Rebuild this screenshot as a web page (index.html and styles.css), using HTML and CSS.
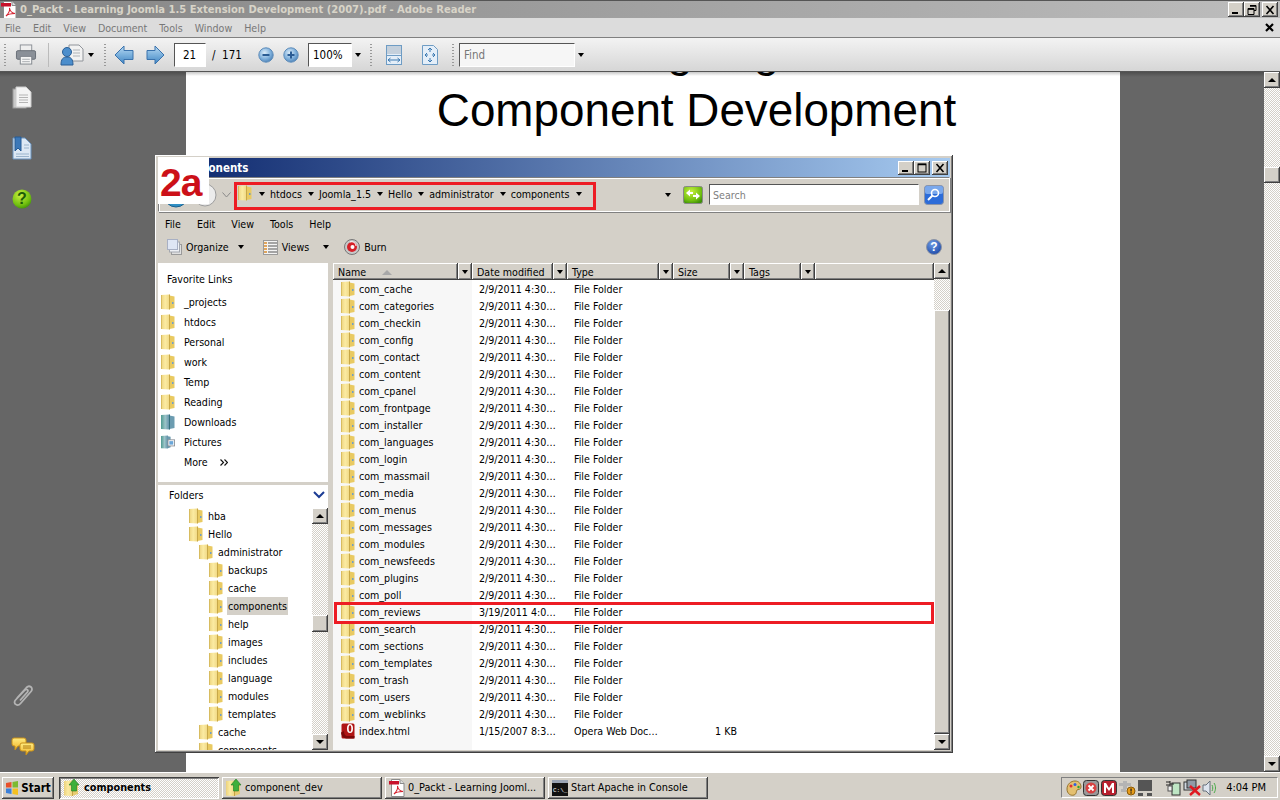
FILE: index.html
```html
<!DOCTYPE html>
<html lang="en">
<head>
  <meta charset="UTF-8">
  <title>0_Packt - Learning Joomla 1.5 Extension Development (2007).pdf - Adobe Reader</title>
  <link rel="stylesheet" href="styles.css">
</head>
<body>

<svg class="sprites" width="0" height="0">
  <defs>
    <linearGradient id="gFold" x1="0" x2="1" y1="0" y2="0">
      <stop offset="0" stop-color="#ecd27c"/><stop offset=".5" stop-color="#fbeba2"/><stop offset="1" stop-color="#f0d884"/>
    </linearGradient>
    <linearGradient id="gTeal" x1="0" x2="1" y1="0" y2="0">
      <stop offset="0" stop-color="#4f9a90"/><stop offset=".5" stop-color="#9cc4c8"/><stop offset="1" stop-color="#5f8fa8"/>
    </linearGradient>
    <linearGradient id="gBlue" x1="0" x2="0" y1="0" y2="1">
      <stop offset="0" stop-color="#b6daf4"/><stop offset="1" stop-color="#3f86c4"/>
    </linearGradient>
    <radialGradient id="gRound" cx=".4" cy=".35" r=".7">
      <stop offset="0" stop-color="#dcecf8"/><stop offset=".6" stop-color="#7fb0dc"/><stop offset="1" stop-color="#4a7fb4"/>
    </radialGradient>
    <radialGradient id="gGreen" cx=".4" cy=".3" r=".75">
      <stop offset="0" stop-color="#c8f040"/><stop offset=".7" stop-color="#72c010"/><stop offset="1" stop-color="#3f9008"/>
    </radialGradient>
    <radialGradient id="gHelp" cx=".4" cy=".3" r=".75">
      <stop offset="0" stop-color="#6f9ce4"/><stop offset="1" stop-color="#1c48a8"/>
    </radialGradient>
    <linearGradient id="gYel" x1="0" x2="0" y1="0" y2="1">
      <stop offset="0" stop-color="#ffeb80"/><stop offset="1" stop-color="#f0b428"/>
    </linearGradient>
    <symbol id="folder" viewBox="0 0 14 16">
      <path d="M0 1 8.500 .5V15.500L0 15Z" fill="url(#gFold)"/>
      <path d="M8.500 1.500 13.500 2.500V14L8.500 15Z" fill="#e9ca62"/>
      <path d="M8.500 .5V15.500" stroke="#c8a848" stroke-width="1"/>
      <path d="M.5 1V15" stroke="#d8bc60" stroke-width="1"/>
      <rect x="11" y="8" width="1.500" height="2" fill="#6f9ec8"/>
    </symbol>
    <symbol id="tealfolder" viewBox="0 0 14 16">
      <path d="M0 1 8.500 .5V15.500L0 15Z" fill="url(#gTeal)"/>
      <path d="M8.500 1.500 13.500 2.500V14L8.500 15Z" fill="#6c9cb0"/>
      <path d="M8.500 .5V15.500" stroke="#35707c"/>
    </symbol>
    <symbol id="pics" viewBox="0 0 16 16">
      <path d="M0 1 8 .5V15.500L0 15Z" fill="url(#gTeal)"/>
      <path d="M8 1.500 11 2V14L8 15Z" fill="#6c9cb0"/>
      <rect x="8" y="5.500" width="7.500" height="7" fill="#fff" stroke="#8a8f96"/>
      <rect x="9.500" y="7" width="4.500" height="4" fill="#6aa6d8"/>
    </symbol>
    <symbol id="opera" viewBox="0 0 14 16">
      <rect x=".5" y=".5" width="13" height="15" rx="1.500" fill="#b01414"/>
      <path d="M0 9.500C.5 14 3 15.500 7 15.500H13.500V13H7C4 13 3 11 3 8Z" fill="#7c0808"/>
      <ellipse cx="9" cy="5.500" rx="3" ry="4.500" fill="#fff"/>
      <ellipse cx="9" cy="5.500" rx="1.300" ry="3.200" fill="#b01414"/>
    </symbol>
    <symbol id="pdf" viewBox="0 0 16 18">
      <path d="M2.500 .5H11L15 4.500V17.500H2.500Z" fill="#fff" stroke="#8a8a8a"/>
      <path d="M11 .5V4.500H15" fill="#ddd" stroke="#8a8a8a"/>
      <rect x="0" y="2" width="10" height="3.500" fill="#c8102a"/>
      <path d="M5 15C8 12 9 9 8.500 7 9 10 11 12 14 12.500 10 12.500 7 13 5 15Z" fill="none" stroke="#d4202e" stroke-width="1.100"/>
    </symbol>
    <symbol id="explorer" viewBox="0 0 16 18">
      <path d="M0 2 8 1.500V17L0 16.500Z" fill="url(#gFold)"/>
      <path d="M8 3 14 4.500V15L8 17Z" fill="#e7cc70"/>
      <path d="M8.500 1.500V17" stroke="#c5a444"/>
      <path d="M10 0 15 6H12.500V12H7.500V6H5Z" fill="#3fb03a" stroke="#1f7a20" stroke-width=".6"/>
    </symbol>
  </defs>
</svg>

<div class="titlebar">
  <svg class="ico16"><use href="#pdf"/></svg>
  <span class="titlebar-text">0_Packt - Learning Joomla 1.5 Extension Development (2007).pdf - Adobe Reader</span>
  <div class="wbtns main-wbtns">
    <button class="wbtn"><svg viewBox="0 0 14 12"><rect x="3" y="8" width="6" height="2" fill="#000"/></svg></button>
    <button class="wbtn"><svg viewBox="0 0 14 12"><path d="M5 1.500h6v5h-2M3 4.500h6v6H3zM3 5h6" fill="none" stroke="#000"/><path d="M5 2h6M3 5h6" stroke="#000" stroke-width="1.600"/></svg></button>
    <button class="wbtn wbtn-close"><svg viewBox="0 0 14 12"><path d="M3.500 2 10.500 10M10.500 2 3.500 10" stroke="#000" stroke-width="1.600"/></svg></button>
  </div>
</div>

<div class="menubar">
  <span>File</span><span>Edit</span><span>View</span><span>Document</span><span>Tools</span><span>Window</span><span>Help</span>
  <svg class="doc-close" viewBox="0 0 9 9"><path d="M1 1 8 8M8 1 1 8" stroke="#000" stroke-width="2.200"/></svg>
</div>

<div class="toolbar">
  <i class="grip g1"></i>
  <svg class="tb-print" width="22" height="21" viewBox="0 0 22 22">
    <rect x="5" y="1" width="12" height="7" fill="#eee" stroke="#8b9096"/>
    <rect x="1" y="7" width="20" height="9" rx="1.500" fill="#8a9098" stroke="#666c74"/>
    <rect x="5" y="13" width="12" height="8" fill="#f4f4f4" stroke="#80868c"/>
    <path d="M7 16h8M7 18.500h8" stroke="#a8acb0"/>
  </svg>
  <i class="sep s1"></i>
  <svg class="tb-share" width="24" height="22" viewBox="0 0 24 22">
    <path d="M9 1h10l4 4v12H9z" fill="#f2f2f2" stroke="#90949a"/>
    <path d="M13 6h7M13 9h7M13 12h7" stroke="#b0b4b8"/>
    <circle cx="7" cy="8" r="4.500" fill="#4c8ecc" stroke="#2b5f96"/>
    <path d="M1 21C1 15 3 13 7 13S13 15 13 21Z" fill="#4c8ecc" stroke="#2b5f96"/>
  </svg>
  <i class="caret c-share"></i>
  <i class="grip g2"></i>
  <svg class="tb-prev" width="20" height="20" viewBox="0 0 20 20"><path d="M1 10 10 1V5.500H19V14.500H10V19Z" fill="url(#gBlue)" stroke="#3a72ac"/></svg>
  <svg class="tb-next" width="19" height="20" viewBox="0 0 19 20"><path d="M18 10 9 1V5.500H1V14.500H9V19Z" fill="url(#gBlue)" stroke="#3a72ac"/></svg>
  <span class="tb-input tb-page">21</span>
  <span class="tb-count">/&nbsp; 171</span>
  <svg class="tb-minus" width="16" height="16" viewBox="0 0 16 16"><circle cx="8" cy="8" r="7.200" fill="url(#gRound)" stroke="#5d8cba"/><rect x="4.500" y="7" width="7" height="2" fill="#2a5c94"/></svg>
  <svg class="tb-plus" width="16" height="16" viewBox="0 0 16 16"><circle cx="8" cy="8" r="7.200" fill="url(#gRound)" stroke="#5d8cba"/><path d="M4.500 8h7M8 4.500v7" stroke="#2a5c94" stroke-width="2"/></svg>
  <span class="tb-input tb-zoom">100%</span>
  <i class="caret c-zoom"></i>
  <i class="grip g3"></i>
  <svg class="tb-fitw" width="16" height="20" viewBox="0 0 16 20"><rect x=".5" y=".5" width="15" height="19" fill="#e4eef8" stroke="#6e9cc4"/><rect x="1" y="1" width="14" height="8" fill="#c4d0dc"/><path d="M1 10.500h14" stroke="#6e9cc4"/><path d="M2 15h12M2 15l2.500-2M2 15l2.500 2M14 15l-2.500-2M14 15l-2.500 2" fill="none" stroke="#3a78b0"/></svg>
  <svg class="tb-fitp" width="16" height="20" viewBox="0 0 16 20"><path d="M.5.500h11l4 4v15H.5z" fill="#e4eef8" stroke="#6e9cc4"/><path d="M8 3V7M8 3 6 5M8 3l2 2M8 17V13M8 17l-2-2M8 17l2-2M3 10H6M3 10l2-2M3 10l2 2M13 10H10M13 10l-2-2M13 10l-2 2" fill="none" stroke="#3a78b0"/></svg>
  <i class="grip g4"></i>
  <span class="tb-input tb-find">Find</span>
  <i class="caret c-find"></i>
</div>

<div class="viewer">
  <div class="side">
    <div class="side-top">
      <svg width="20" height="24" viewBox="0 0 20 24"><rect x="1" y="3" width="13" height="19" fill="#c8c8c8" stroke="#999"/><path d="M4 1h10l5 5v15H4z" fill="#f4f4f4" stroke="#ccc"/><path d="M7 9h9M7 11.500h9M7 14h9M7 16.500h9" stroke="#b4b4b4"/></svg>
      <svg class="side-gap1" width="20" height="24" viewBox="0 0 20 24"><path d="M1 2h12l6 6v15H1z" fill="#dce8f4" stroke="#6a94c0"/><path d="M3 1h6v14l-3-3-3 3z" fill="#3c78b8" stroke="#245a94"/><path d="M12 12h5M4 18h13M4 20.500h13M12 9h5" stroke="#9ab4cc"/></svg>
      <svg class="side-gap2" width="20" height="20" viewBox="0 0 20 20"><circle cx="10" cy="10" r="9.500" fill="url(#gGreen)"/><text x="10" y="15" class="side-q">?</text></svg>
    </div>
    <div class="side-bottom">
      <svg width="22" height="25" viewBox="0 0 22 25"><path d="M5 14 14.500 3.500C17.500 .5 22 4 19 7.500L8.500 19.500C5.500 23 .5 19.500 3.500 16L13 6C14.500 4.500 17 6 15.500 8L8 16.500" fill="none" stroke="#b4b4b4" stroke-width="1.800"/></svg>
      <svg class="side-gap3" width="24" height="19" viewBox="0 0 24 19"><path d="M3 1h10q2 0 2 2v4q0 2-2 2H7l-3 4V9H3Q1 9 1 7V3q0-2 2-2z" fill="url(#gYel)" stroke="#c89018"/><path d="M11 6h10q2 0 2 2v4q0 2-2 2h-3l-3 4v-4h-4q-2 0-2-2V8q0-2 2-2z" fill="url(#gYel)" stroke="#c89018"/><path d="M12 9h8M12 11h8" stroke="#b07c10"/></svg>
    </div>
  </div>
  <div class="page">
    <h1 class="page-title">Designing a<br>Component Development</h1>
  </div>
  <div class="gutter"></div>
  <div class="sb sb-main">
    <button class="sb-btn"><i class="tri-up"></i></button>
    <div class="sb-track t-main-a"></div>
    <div class="sb-thumb t-main-b"></div>
    <div class="sb-track sb-fill"></div>
    <button class="sb-btn"><i class="tri-down"></i></button>
  </div>
</div>

<div class="taskbar">
  <button class="start">
    <svg width="14" height="14" viewBox="0 0 14 14"><path d="M1 2 6.500 1V6.500H1Z" fill="#e8502a"/><path d="M7.500 1 13 0V6.500H7.500Z" fill="#7cba30"/><path d="M1 7.500H6.500V13L1 12Z" fill="#3c80d8"/><path d="M7.500 7.500H13V14L7.500 13Z" fill="#f4c020"/></svg>
    Start
  </button>
  <button class="task task-on"><svg class="ico16"><use href="#explorer"/></svg>components</button>
  <button class="task"><svg class="ico16"><use href="#explorer"/></svg>component_dev</button>
  <button class="task"><svg class="ico16"><use href="#pdf"/></svg>0_Packt - Learning Jooml...</button>
  <button class="task"><svg class="ico16" viewBox="0 0 16 16"><rect width="16" height="16" y="0" fill="#111"/><rect width="16" height="3" fill="#9aa4b4"/><text x="1" y="12" class="cmd-text">C:\_</text></svg>Start Apache in Console</button>
  <div class="tray">
    <svg width="16" height="16" viewBox="0 0 16 16"><path d="M1 9C1 4 5 1 9 1s6 3 6 6-3 2-4 3 0 4-3 5-7-1-7-6Z" fill="#e4c070" stroke="#96742c"/><circle cx="5" cy="6" r="1.500" fill="#e03030"/><circle cx="9" cy="4.500" r="1.500" fill="#3060e0"/><circle cx="12.500" cy="7" r="1.200" fill="#30a030"/></svg>
    <svg class="tray-a" width="16" height="16" viewBox="0 0 16 16"><rect x=".5" y=".5" width="15" height="15" rx="3" fill="#999" stroke="#333"/><circle cx="8" cy="8" r="5.500" fill="#d84040"/><path d="M5.500 5.500 10.500 10.500M10.500 5.500 5.500 10.500" stroke="#fff" stroke-width="1.800"/></svg>
    <svg class="tray-b" width="16" height="16" viewBox="0 0 16 16"><rect x=".5" y=".5" width="15" height="15" rx="3" fill="#b8202e" stroke="#333"/><path d="M3 13V3H5L8 8 11 3H13V13H11V7L8 11 5 7V13Z" fill="#fff"/></svg>
    <svg class="tray-b" width="18" height="16" viewBox="0 0 18 16"><path d="M0 3h4V1h4v2h4v3h-4v3H4V6H0ZM2 9h5v3H2Z" fill="#b4b4b4"/><circle cx="12" cy="11" r="4" fill="#e89c18" stroke="#8a5a08"/><rect x="11.400" y="8.500" width="1.300" height="3" fill="#222"/><rect x="11.400" y="12.300" width="1.300" height="1.300" fill="#222"/></svg>
    <svg class="tray-a" width="14" height="16" viewBox="0 0 14 16"><rect x="0" y="0" width="14" height="11" fill="#555"/><rect x="0" y="13" width="5" height="3" fill="#555"/><rect x="9" y="13" width="5" height="3" fill="#555"/></svg>
    <svg class="tray-plug" width="16" height="16" viewBox="0 0 16 16"><rect x="7" y="3" width="8" height="12" fill="#bfe6c4" stroke="#333"/><path d="M1 2h4M1 5h4M5 1v6M5 4h4" stroke="#222"/><rect x="3" y="6" width="4" height="5" fill="#eee" stroke="#555"/></svg>
    <svg class="tray-b" width="18" height="17" viewBox="0 0 18 17"><rect x="1" y="3" width="9" height="8" fill="#cfd6e0" stroke="#333"/><rect x="4" y="1" width="9" height="8" fill="#909aa6" stroke="#333"/><path d="M7 7 17 16M17 7 7 16" stroke="#e01820" stroke-width="2.400"/></svg>
    <svg class="tray-a" width="14" height="16" viewBox="0 0 14 16"><path d="M1 5h3l4-4v14L4 11H1Z" fill="#dde4ee" stroke="#66707c"/><path d="M10 5c1 2 1 4 0 6M12 3c2 3 2 7 0 10" fill="none" stroke="#48a848"/></svg>
    <span class="clock">4:04 PM</span>
  </div>
</div>

<!-- explorer window floats over the pdf -->
<div class="win">
  <div class="win-title">
    <span class="win-title-text">components</span>
    <div class="wbtns">
      <button class="wbtn"><svg viewBox="0 0 14 12"><rect x="3" y="8" width="6" height="2" fill="#000"/></svg></button>
      <button class="wbtn"><svg viewBox="0 0 14 12"><rect x="3" y="2" width="8" height="8" fill="none" stroke="#000"/><path d="M3 2.500h8" stroke="#000" stroke-width="1.500"/></svg></button>
      <button class="wbtn wbtn-close"><svg viewBox="0 0 14 12"><path d="M3.500 2 10.500 10M10.500 2 3.500 10" stroke="#000" stroke-width="1.600"/></svg></button>
    </div>
  </div>

  <div class="addr">
    <svg class="nav-back" width="26" height="26" viewBox="0 0 26 26"><circle cx="13" cy="13" r="12" fill="#2f8fc4" stroke="#1c5f8c"/></svg>
    <svg class="nav-fwd" width="24" height="24" viewBox="0 0 24 24"><circle cx="12" cy="12" r="11" fill="#ececec" stroke="#9c9c9c"/></svg>
    <svg class="nav-drop" width="9" height="6" viewBox="0 0 9 6"><path d="M.5.500 4.500 5 8.500.500" fill="none" stroke="#8a8a8a"/></svg>
    <svg class="addr-folder" width="14" height="16"><use href="#folder"/></svg>
    <div class="crumbs">
      <i class="caret"></i><span>htdocs</span>
      <i class="caret"></i><span>Joomla_1.5</span>
      <i class="caret"></i><span>Hello</span>
      <i class="caret"></i><span>administrator</span>
      <i class="caret"></i><span>components</span>
      <i class="caret"></i>
    </div>
    <i class="caret addr-drop"></i>
    <svg class="addr-go" width="20" height="18" viewBox="0 0 20 18"><rect x=".5" y=".5" width="19" height="17" rx="2" fill="url(#gGreen)" stroke="#888"/><path d="M3 7 7 3.500V6H10V8H7V10.500ZM17 10 13 13.500V11H10V9H13V6.500Z" fill="#fff"/></svg>
    <span class="search-box">Search</span>
    <svg class="search-btn" width="20" height="20" viewBox="0 0 20 20"><rect x=".5" y=".5" width="19" height="19" rx="3" fill="#2c6cd8" stroke="#8a94a8"/><rect x="1" y="1" width="18" height="8" rx="2" fill="#7aa8ec"/><circle cx="11" cy="8" r="3.500" fill="none" stroke="#fff" stroke-width="1.600"/><path d="M8.500 10.500 4 15" stroke="#fff" stroke-width="2"/></svg>
  </div>

  <div class="win-menu">
    <span>File</span><span>Edit</span><span>View</span><span>Tools</span><span>Help</span>
  </div>

  <div class="win-tools">
    <svg class="wt-org" width="15" height="16" viewBox="0 0 15 16"><rect x="4.500" y="5.500" width="10" height="10" fill="#e0e0e0" stroke="#9a9a9a"/><rect x="2.500" y="3" width="10" height="10" fill="#eef0f4" stroke="#a4a8b0"/><rect x=".5" y=".5" width="10" height="10" fill="#dfe6f4" stroke="#a8b0c4"/></svg>
    <span class="wt-label">Organize</span>
    <i class="caret wt-caret1"></i>
    <svg class="wt-views" width="15" height="15" viewBox="0 0 15 15"><rect x=".5" y=".5" width="14" height="14" fill="#f4f4f4" stroke="#9a9a9a"/><path d="M1 3h3M1 6h3M1 9h3M1 12h3" stroke="#d88a2c" stroke-width="1.500"/><path d="M5 3h9M5 6h9M5 9h9M5 12h9" stroke="#555" stroke-width="1.200"/></svg>
    <span class="wt-label">Views</span>
    <i class="caret wt-caret2"></i>
    <svg class="wt-burn" width="16" height="16" viewBox="0 0 16 16"><circle cx="8" cy="8" r="7.500" fill="#c8c8c8" stroke="#777"/><circle cx="8" cy="8" r="5" fill="#d42028"/><circle cx="8.500" cy="8" r="2" fill="#fff"/><path d="M6 3c3-1 6 1 6 4" fill="none" stroke="#fff"/></svg>
    <span class="wt-label">Burn</span>
    <svg class="wt-help" width="16" height="16" viewBox="0 0 16 16"><circle cx="8" cy="8" r="7.500" fill="url(#gHelp)" stroke="#8c94a4"/><text x="8" y="12" class="help-q">?</text></svg>
  </div>

  <div class="panes">
    <div class="nav">
      <div class="fav">
        <div class="fav-head">Favorite Links</div>
        <div class="fav-row"><svg width="14" height="16"><use href="#folder"/></svg>_projects</div>
        <div class="fav-row"><svg width="14" height="16"><use href="#folder"/></svg>htdocs</div>
        <div class="fav-row"><svg width="14" height="16"><use href="#folder"/></svg>Personal</div>
        <div class="fav-row"><svg width="14" height="16"><use href="#folder"/></svg>work</div>
        <div class="fav-row"><svg width="14" height="16"><use href="#folder"/></svg>Temp</div>
        <div class="fav-row"><svg width="14" height="16"><use href="#folder"/></svg>Reading</div>
        <div class="fav-row"><svg width="14" height="16"><use href="#tealfolder"/></svg>Downloads</div>
        <div class="fav-row"><svg width="14" height="16"><use href="#pics"/></svg>Pictures</div>
        <div class="fav-row fav-more">More<svg class="more-ico" width="8" height="7" viewBox="0 0 8 7"><path d="M.5.500 3.500 3.500.5 6.500M4.500.500 7.500 3.500 4.500 6.500" fill="none" stroke="#111" stroke-width="1.200"/></svg></div>
      </div>
      <div class="folders">
        <div class="folders-head">Folders
          <svg width="12" height="8" viewBox="0 0 12 8"><path d="M1 1 6 6 11 1" fill="none" stroke="#1c3c94" stroke-width="2"/></svg>
        </div>
        <div class="tree-wrap">
          <div class="tree">
            <div class="node l1"><svg width="14" height="16"><use href="#folder"/></svg><span>hba</span></div>
            <div class="node l1"><svg width="14" height="16"><use href="#folder"/></svg><span>Hello</span></div>
            <div class="node l2"><svg width="14" height="16"><use href="#folder"/></svg><span>administrator</span></div>
            <div class="node l3"><svg width="14" height="16"><use href="#folder"/></svg><span>backups</span></div>
            <div class="node l3"><svg width="14" height="16"><use href="#folder"/></svg><span>cache</span></div>
            <div class="node l3"><svg width="14" height="16"><use href="#folder"/></svg><span class="node-sel">components</span></div>
            <div class="node l3"><svg width="14" height="16"><use href="#folder"/></svg><span>help</span></div>
            <div class="node l3"><svg width="14" height="16"><use href="#folder"/></svg><span>images</span></div>
            <div class="node l3"><svg width="14" height="16"><use href="#folder"/></svg><span>includes</span></div>
            <div class="node l3"><svg width="14" height="16"><use href="#folder"/></svg><span>language</span></div>
            <div class="node l3"><svg width="14" height="16"><use href="#folder"/></svg><span>modules</span></div>
            <div class="node l3"><svg width="14" height="16"><use href="#folder"/></svg><span>templates</span></div>
            <div class="node l2"><svg width="14" height="16"><use href="#folder"/></svg><span>cache</span></div>
            <div class="node l2"><svg width="14" height="16"><use href="#folder"/></svg><span>components</span></div>
          </div>
          <div class="sb sb-tree">
            <button class="sb-btn"><i class="tri-up"></i></button>
            <div class="sb-track t-tree-a"></div>
            <div class="sb-thumb t-tree-b"></div>
            <div class="sb-track sb-fill"></div>
            <button class="sb-btn"><i class="tri-down"></i></button>
          </div>
        </div>
      </div>
    </div>

    <div class="list">
      <div class="list-main">
        <div class="list-head">
          <div class="hcell h-name">Name<i class="sort-up"></i></div><div class="hbtn"><i class="caret"></i></div>
          <div class="hcell h-date">Date modified</div><div class="hbtn"><i class="caret"></i></div>
          <div class="hcell h-type">Type</div><div class="hbtn"><i class="caret"></i></div>
          <div class="hcell h-size">Size</div><div class="hbtn"><i class="caret"></i></div>
          <div class="hcell h-tags">Tags</div><div class="hbtn"><i class="caret"></i></div>
          <div class="hcell h-rest"></div>
        </div>
        <div class="list-body">
          <div class="row"><span class="r-name"><svg width="14" height="16"><use href="#folder"/></svg>com_cache</span><span>2/9/2011 4:30…</span><span>File Folder</span></div>
          <div class="row"><span class="r-name"><svg width="14" height="16"><use href="#folder"/></svg>com_categories</span><span>2/9/2011 4:30…</span><span>File Folder</span></div>
          <div class="row"><span class="r-name"><svg width="14" height="16"><use href="#folder"/></svg>com_checkin</span><span>2/9/2011 4:30…</span><span>File Folder</span></div>
          <div class="row"><span class="r-name"><svg width="14" height="16"><use href="#folder"/></svg>com_config</span><span>2/9/2011 4:30…</span><span>File Folder</span></div>
          <div class="row"><span class="r-name"><svg width="14" height="16"><use href="#folder"/></svg>com_contact</span><span>2/9/2011 4:30…</span><span>File Folder</span></div>
          <div class="row"><span class="r-name"><svg width="14" height="16"><use href="#folder"/></svg>com_content</span><span>2/9/2011 4:30…</span><span>File Folder</span></div>
          <div class="row"><span class="r-name"><svg width="14" height="16"><use href="#folder"/></svg>com_cpanel</span><span>2/9/2011 4:30…</span><span>File Folder</span></div>
          <div class="row"><span class="r-name"><svg width="14" height="16"><use href="#folder"/></svg>com_frontpage</span><span>2/9/2011 4:30…</span><span>File Folder</span></div>
          <div class="row"><span class="r-name"><svg width="14" height="16"><use href="#folder"/></svg>com_installer</span><span>2/9/2011 4:30…</span><span>File Folder</span></div>
          <div class="row"><span class="r-name"><svg width="14" height="16"><use href="#folder"/></svg>com_languages</span><span>2/9/2011 4:30…</span><span>File Folder</span></div>
          <div class="row"><span class="r-name"><svg width="14" height="16"><use href="#folder"/></svg>com_login</span><span>2/9/2011 4:30…</span><span>File Folder</span></div>
          <div class="row"><span class="r-name"><svg width="14" height="16"><use href="#folder"/></svg>com_massmail</span><span>2/9/2011 4:30…</span><span>File Folder</span></div>
          <div class="row"><span class="r-name"><svg width="14" height="16"><use href="#folder"/></svg>com_media</span><span>2/9/2011 4:30…</span><span>File Folder</span></div>
          <div class="row"><span class="r-name"><svg width="14" height="16"><use href="#folder"/></svg>com_menus</span><span>2/9/2011 4:30…</span><span>File Folder</span></div>
          <div class="row"><span class="r-name"><svg width="14" height="16"><use href="#folder"/></svg>com_messages</span><span>2/9/2011 4:30…</span><span>File Folder</span></div>
          <div class="row"><span class="r-name"><svg width="14" height="16"><use href="#folder"/></svg>com_modules</span><span>2/9/2011 4:30…</span><span>File Folder</span></div>
          <div class="row"><span class="r-name"><svg width="14" height="16"><use href="#folder"/></svg>com_newsfeeds</span><span>2/9/2011 4:30…</span><span>File Folder</span></div>
          <div class="row"><span class="r-name"><svg width="14" height="16"><use href="#folder"/></svg>com_plugins</span><span>2/9/2011 4:30…</span><span>File Folder</span></div>
          <div class="row"><span class="r-name"><svg width="14" height="16"><use href="#folder"/></svg>com_poll</span><span>2/9/2011 4:30…</span><span>File Folder</span></div>
          <div class="row"><span class="r-name"><svg width="14" height="16"><use href="#folder"/></svg>com_reviews</span><span>3/19/2011 4:0…</span><span>File Folder</span></div>
          <div class="row"><span class="r-name"><svg width="14" height="16"><use href="#folder"/></svg>com_search</span><span>2/9/2011 4:30…</span><span>File Folder</span></div>
          <div class="row"><span class="r-name"><svg width="14" height="16"><use href="#folder"/></svg>com_sections</span><span>2/9/2011 4:30…</span><span>File Folder</span></div>
          <div class="row"><span class="r-name"><svg width="14" height="16"><use href="#folder"/></svg>com_templates</span><span>2/9/2011 4:30…</span><span>File Folder</span></div>
          <div class="row"><span class="r-name"><svg width="14" height="16"><use href="#folder"/></svg>com_trash</span><span>2/9/2011 4:30…</span><span>File Folder</span></div>
          <div class="row"><span class="r-name"><svg width="14" height="16"><use href="#folder"/></svg>com_users</span><span>2/9/2011 4:30…</span><span>File Folder</span></div>
          <div class="row"><span class="r-name"><svg width="14" height="16"><use href="#folder"/></svg>com_weblinks</span><span>2/9/2011 4:30…</span><span>File Folder</span></div>
          <div class="row"><span class="r-name"><svg width="14" height="16"><use href="#opera"/></svg>index.html</span><span>1/15/2007 8:3…</span><span>Opera Web Doc…</span><span class="r-size">1 KB</span></div>
        </div>
      </div>
      <div class="sb sb-list">
        <button class="sb-btn"><i class="tri-up"></i></button>
        <div class="sb-track t-list-a"></div>
        <div class="sb-thumb sb-fill"></div>
        <button class="sb-btn"><i class="tri-down"></i></button>
      </div>
    </div>
  </div>

  <!-- annotations drawn on top of the screenshot -->
  <div class="tag-2a">2a</div>
  <div class="mark mark-addr"></div>
  <div class="mark mark-row"></div>
</div>

</body>
</html>
```

FILE: styles.css
```css
* {
  box-sizing: border-box;
}
html, body {
  margin: 0;
  height: 100%;
}
body {
  position: relative;
  width: 1280px;
  height: 800px;
  overflow: hidden;
  display: flex;
  flex-direction: column;
  background: #666;
  color: #000;
  font-family: "DejaVu Sans Condensed", "DejaVu Sans", sans-serif;
  font-size: 10.6px;
}
button {
  font: inherit;
  color: inherit;
  padding: 0;
  border: 0;
  background: #d4d0c8;
}
svg {
  display: block;
  flex: none;
}
i {
  display: block;
  flex: none;
}
.sprites {
  position: absolute;
}
.ico16 {
  width: 16px;
  height: 18px;
}

/* win9x bevels */
.wbtn, .sb-btn, .sb-thumb, .hcell, .hbtn, .start, .task {
  background-color: #d4d0c8;
  box-shadow: inset -1px -1px #404040, inset 1px 1px #fff, inset -2px -2px #808080;
}
.caret {
  width: 0;
  height: 0;
  border-left: 3.5px solid transparent;
  border-right: 3.5px solid transparent;
  border-top: 4px solid #000;
}

/* reader chrome */
.titlebar {
  height: 18px;
  display: flex;
  align-items: center;
  padding-left: 1px;
  border-top: 1px solid #555;
  background: linear-gradient(90deg, #858585, #bdbdbd);
  color: #d8d4c8;
  font-weight: bold;
}
.titlebar-text {
  margin-left: 3px;
  font-size: 11.1px;
}
.wbtns {
  display: flex;
  margin-left: auto;
  margin-right: 2px;
}
.wbtn {
  width: 16px;
  height: 14px;
}
.wbtn svg {
  width: 14px;
  height: 12px;
  margin: 1px;
}
.wbtn-close {
  margin-left: 2px;
}
.main-wbtns .wbtn {
  height: 15px;
}
.menubar {
  height: 20px;
  display: flex;
  align-items: center;
  padding-left: 5px;
  gap: 12px;
  background: #dcdcdc;
  border-bottom: 1px solid #808080;
  color: #777;
}
.doc-close {
  width: 9px;
  height: 9px;
  margin-left: auto;
  margin-right: 6px;
}
.toolbar {
  height: 34px;
  display: flex;
  align-items: center;
  background: linear-gradient(#f3f3f3, #d6d6d6);
  border-bottom: 1px solid #555;
  font-size: 11.5px;
}
.grip {
  width: 2px;
  height: 22px;
  background: repeating-linear-gradient(#999 0 1px, transparent 1px 3px);
}
.sep {
  width: 1px;
  height: 24px;
  background: #bbb;
}
.g1 { margin-left: 4px; }
.tb-print { margin-left: 9px; }
.s1 { margin-left: 11px; }
.tb-share { margin-left: 11px; }
.c-share { margin-left: 4px; }
.g2 { margin-left: 10px; }
.tb-prev { margin-left: 8px; }
.tb-next { margin-left: 12px; }
.tb-input {
  height: 24px;
  display: flex;
  align-items: center;
  background: #f6f6f6;
  border: 1px solid #fff;
  border-top-color: #555;
  border-left-color: #555;
  padding-left: 8px;
}
.tb-page {
  width: 32px;
  margin-left: 9px;
  background: #fff;
}
.tb-count {
  margin-left: 6px;
  width: 30px;
  white-space: nowrap;
}
.tb-minus { margin-left: 16px; }
.tb-plus { margin-left: 9px; }
.tb-zoom {
  width: 44px;
  margin-left: 9px;
  padding-left: 4px;
  background: #fff;
}
.c-zoom { margin-left: 3px; }
.g3 { margin-left: 9px; }
.tb-fitw { margin-left: 14px; }
.tb-fitp { margin-left: 20px; }
.g4 { margin-left: 14px; }
.tb-find {
  width: 116px;
  margin-left: 5px;
  padding-left: 4px;
  color: #777;
}
.c-find { margin-left: 3px; }

.viewer {
  height: 700px;
  display: flex;
  background: linear-gradient(#4e4e4e, #666 5px);
}
.side {
  width: 186px;
  padding: 14px 0 16px 12px;
  display: flex;
  flex-direction: column;
  justify-content: space-between;
}
.side-gap1 { margin-top: 26px; }
.side-gap2 { margin-top: 29px; }
.side-gap3 { margin-top: 28px; margin-left: -1px; }
.side-q {
  font-size: 16px;
  font-weight: bold;
  font-family: "Liberation Sans", sans-serif;
  fill: #1c5c08;
  text-anchor: middle;
}
.page {
  width: 934px;
  overflow: hidden;
  background: linear-gradient(#c8c8c8, #fff 4px);
  padding-left: 87px;
}
.page-title {
  margin: -51px 0 0;
  font-family: "Liberation Sans", sans-serif;
  font-weight: normal;
  font-size: 45.8px;
  line-height: 60px;
  text-align: center;
  white-space: nowrap;
}
.gutter {
  flex: 1;
}

/* scrollbars */
.sb {
  width: 16px;
  display: flex;
  flex-direction: column;
  flex: none;
}
.sb-btn {
  height: 16px;
  flex: none;
  display: flex;
  align-items: center;
  justify-content: center;
}
.sb-track {
  background: repeating-conic-gradient(#d4d0c8 0 25%, #fff 0 50%) 0 0 / 2px 2px;
}
.sb-fill {
  flex: 1;
}
.tri-up {
  border-left: 4px solid transparent;
  border-right: 4px solid transparent;
  border-bottom: 4px solid #000;
}
.tri-down {
  border-left: 4px solid transparent;
  border-right: 4px solid transparent;
  border-top: 4px solid #000;
}
.t-main-a { height: 79px; }
.t-main-b { height: 16px; }
.t-tree-a { height: 91px; }
.t-tree-b { height: 17px; }
.t-list-a { height: 31px; }

/* taskbar */
.taskbar {
  height: 28px;
  display: flex;
  align-items: center;
  padding: 2px 2px 0;
  background: #d4d0c8;
  border-top: 1px solid #fff;
  font-size: 10.8px;
}
.start {
  width: 52px;
  height: 22px;
  display: flex;
  align-items: center;
  justify-content: center;
  gap: 2px;
  font-weight: bold;
  font-size: 11.5px;
}
.task {
  width: 160px;
  height: 22px;
  margin-left: 3px;
  display: flex;
  align-items: center;
  gap: 3px;
  padding-left: 4px;
  white-space: nowrap;
}
.task-on {
  width: 160px;
  margin-left: 5px;
  padding-left: 5px;
  gap: 4px;
  font-weight: bold;
  background: repeating-conic-gradient(#d4d0c8 0 25%, #fff 0 50%) 0 0 / 2px 2px;
  box-shadow: inset 1px 1px #404040, inset -1px -1px #fff, inset 2px 2px #808080;
}
.cmd-text {
  font-size: 6px;
  font-family: "Liberation Mono", monospace;
  fill: #fff;
}
.tray {
  margin-left: auto;
  width: 217px;
  height: 21px;
  display: flex;
  align-items: center;
  padding-left: 4px;
  border: 1px solid #fff;
  border-top-color: #808080;
  border-left-color: #808080;
}
.tray-a { margin-left: 1px; }
.tray-b { margin-left: 2px; }
.tray-plug { margin-left: 13px; }
.clock {
  margin-left: auto;
  margin-right: 11px;
  font-size: 11px;
}

/* explorer window */
.win {
  position: absolute;
  left: 155px;
  top: 155px;
  width: 798px;
  height: 598px;
  padding: 3px;
  background: #d4d0c8;
  box-shadow: inset -1px -1px #404040, inset 1px 1px #fff, inset -2px -2px #808080;
  display: flex;
  flex-direction: column;
}
.win-title {
  height: 19px;
  display: flex;
  align-items: center;
  padding-left: 19px;
  background: linear-gradient(90deg, #0a246a, #a6caf0);
  color: #fff;
  font-weight: bold;
  font-size: 11.5px;
}
.addr {
  height: 35px;
  display: flex;
  align-items: center;
  border: 1px solid #808080;
  border-right-color: #fff;
  border-bottom-color: #fff;
  box-shadow: 1px 1px #808080, inset 1px 1px #fff;
}
.nav-back { margin-left: 4px; }
.nav-fwd { margin-left: 4px; }
.nav-drop { margin-left: 5px; }
.addr-folder {
  margin-left: 7px;
  margin-bottom: 3px;
}
.crumbs {
  display: flex;
  align-items: center;
  margin-left: 7px;
  margin-bottom: 2px;
  width: 397px;
}
.crumbs .caret {
  margin-right: 5px;
}
.crumbs span {
  margin-right: 6px;
}
.addr-drop { margin-left: 9px; }
.addr-go { margin-left: 12px; }
.search-box {
  width: 210px;
  height: 21px;
  margin-left: 6px;
  padding-left: 3px;
  display: flex;
  align-items: center;
  background: #fff;
  color: #808080;
  border: 1px solid #fff;
  border-top-color: #555;
  border-left-color: #555;
}
.search-btn { margin-left: 5px; }
.win-menu {
  height: 21px;
  margin-top: 1px;
  display: flex;
  align-items: center;
  padding-left: 7px;
  gap: 16px;
}
.win-tools {
  height: 26px;
  display: flex;
  align-items: center;
}
.wt-org { margin-left: 9px; }
.wt-label { margin-left: 4px; }
.wt-caret1 { margin-left: 9px; }
.wt-views { margin-left: 19px; }
.wt-caret2 { margin-left: 14px; }
.wt-burn { margin-left: 15px; }
.wt-help { margin-left: auto; margin-right: 8px; }
.help-q {
  font-size: 12px;
  font-weight: bold;
  font-family: "Liberation Sans", sans-serif;
  fill: #fff;
  text-anchor: middle;
}
.panes {
  height: 487px;
  margin-top: 3px;
  display: flex;
  gap: 5px;
}

/* left pane */
.nav {
  width: 170px;
  display: flex;
  flex-direction: column;
  gap: 3px;
}
.fav {
  height: 219px;
  background: #fff;
  padding-top: 6px;
}
.fav-head {
  height: 20px;
  padding-left: 9px;
  margin-bottom: 3px;
  display: flex;
  align-items: center;
}
.fav-row {
  height: 20px;
  display: flex;
  align-items: center;
  padding-left: 3px;
  gap: 9px;
}
.fav-more {
  padding-left: 26px;
  gap: 12px;
}
.folders {
  flex: 1;
  min-height: 0;
  display: flex;
  flex-direction: column;
  background: #fff;
}
.folders-head {
  height: 23px;
  flex: none;
  display: flex;
  align-items: center;
  justify-content: space-between;
  padding: 0 3px 3px 11px;
}
.tree-wrap {
  flex: 1;
  min-height: 0;
  display: flex;
}
.tree {
  flex: 1;
  overflow: hidden;
  margin-top: -1px;
}
.node {
  height: 18px;
  display: flex;
  align-items: center;
  gap: 4px;
}
.node span {
  padding: 0 1px;
  height: 18px;
  line-height: 18px;
}
.l1 { padding-left: 31px; }
.l2 { padding-left: 41px; }
.l3 { padding-left: 51px; }
.node-sel {
  background: #d4d0c8;
}

/* file list */
.list {
  flex: 1;
  display: flex;
  background: #fff;
}
.list-main {
  flex: 1;
  min-width: 0;
  display: flex;
  flex-direction: column;
}
.list-head {
  height: 17px;
  flex: none;
  display: flex;
}
.hcell {
  height: 17px;
  padding: 1px 0 0 5px;
  display: flex;
  align-items: center;
}
.hbtn {
  width: 14px;
  height: 17px;
  display: flex;
  align-items: center;
  justify-content: center;
}
.h-name { width: 125px; }
.h-date { width: 81px; }
.h-type { width: 92px; }
.h-size { width: 57px; }
.h-tags { width: 57px; }
.h-rest { flex: 1; }
.sort-up {
  margin-left: 16px;
  border-left: 5px solid transparent;
  border-right: 5px solid transparent;
  border-bottom: 5px solid #a8a8a8;
}
.list-body {
  flex: 1;
  background: linear-gradient(90deg, #f7f7f7 139px, #fff 139px);
}
.row {
  height: 17px;
  display: grid;
  grid-template-columns: 146px 95px 103px 60px;
  align-items: center;
  white-space: nowrap;
}
.r-name {
  display: flex;
  align-items: center;
  gap: 4px;
  padding-left: 8px;
}
.r-size {
  text-align: right;
}

/* annotations */
.tag-2a {
  position: absolute;
  left: 3px;
  top: 2px;
  width: 51px;
  height: 47px;
  padding-left: 2px;
  background: #fff;
  color: #cc1018;
  font-family: "Liberation Sans", sans-serif;
  font-weight: bold;
  font-size: 39px;
  line-height: 52px;
  letter-spacing: -1px;
}
.mark {
  position: absolute;
  border: 3px solid #ed1c24;
}
.mark-addr {
  left: 79px;
  top: 27px;
  width: 362px;
  height: 28px;
}
.mark-row {
  left: 179px;
  top: 447px;
  width: 600px;
  height: 22px;
}
```
